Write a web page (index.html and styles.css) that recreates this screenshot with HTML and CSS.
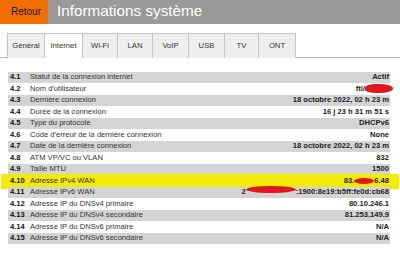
FILE: index.html
```html
<!DOCTYPE html>
<html lang="fr">
<head>
<meta charset="utf-8">
<title>Informations système</title>
<link rel="stylesheet" href="styles.css">
</head>
<body>
<header class="header">
  <div class="back">Retour</div>
  <h1 class="title">Informations système</h1>
</header>
<nav class="tabs">
  <div class="tab">Général</div>
  <div class="tab active">Internet</div>
  <div class="tab">Wi-Fi</div>
  <div class="tab">LAN</div>
  <div class="tab">VoIP</div>
  <div class="tab">USB</div>
  <div class="tab">TV</div>
  <div class="tab">ONT</div>
</nav>
<div class="table">
  <div class="row"><span class="num">4.1</span><span class="label">Statut de la connexion internet</span><span class="val">Actif</span></div>
  <div class="row"><span class="num">4.2</span><span class="label">Nom d'utilisateur</span><span class="val">fti/<span class="blob blob-user"></span></span></div>
  <div class="row"><span class="num">4.3</span><span class="label">Dernière connexion</span><span class="val">18 octobre 2022, 02 h 23 m</span></div>
  <div class="row"><span class="num">4.4</span><span class="label">Durée de la connexion</span><span class="val">16 j 23 h 31 m 51 s</span></div>
  <div class="row"><span class="num">4.5</span><span class="label">Type du protocole</span><span class="val">DHCPv6</span></div>
  <div class="row"><span class="num">4.6</span><span class="label">Code d'erreur de la dernière connexion</span><span class="val">None</span></div>
  <div class="row"><span class="num">4.7</span><span class="label">Date de la dernière connexion</span><span class="val">18 octobre 2022, 02 h 23 m</span></div>
  <div class="row"><span class="num">4.8</span><span class="label">ATM VP/VC ou VLAN</span><span class="val">832</span></div>
  <div class="row"><span class="num">4.9</span><span class="label">Taille MTU</span><span class="val">1500</span></div>
  <div class="row highlight"><span class="num">4.10</span><span class="label">Adresse IPv4 WAN</span><span class="val">83.<span class="blob blob-v4"></span>6.48</span></div>
  <div class="row"><span class="num">4.11</span><span class="label">Adresse IPv6 WAN</span><span class="val">2<span class="blob blob-v6"></span>:1900:8e19:b5ff:fe0d:cb68</span></div>
  <div class="row"><span class="num">4.12</span><span class="label">Adresse IP du DNSv4 primaire</span><span class="val">80.10.246.1</span></div>
  <div class="row"><span class="num">4.13</span><span class="label">Adresse IP du DNSv4 secondaire</span><span class="val">81.253.149.9</span></div>
  <div class="row"><span class="num">4.14</span><span class="label">Adresse IP du DNSv6 primaire</span><span class="val">N/A</span></div>
  <div class="row"><span class="num">4.15</span><span class="label">Adresse IP du DNSv6 secondaire</span><span class="val">N/A</span></div>
</div>
</body>
</html>
```

FILE: styles.css
```css
html, body {
  margin: 0;
  padding: 0;
  background: #ffffff;
}

body {
  font-family: "Liberation Sans", Arial, sans-serif;
  color: #222222;
  width: 400px;
  overflow: hidden;
}

.header {
  display: flex;
  height: 24px;
}

.back {
  width: 48px;
  box-sizing: border-box;
  padding-left: 11px;
  background: #f16e00;
  color: #111111;
  font-size: 10px;
  line-height: 24px;
}

.title {
  flex: 1;
  margin: 0;
  padding-left: 9px;
  background: #999999;
  color: #ffffff;
  font-weight: normal;
  font-size: 15.3px;
  line-height: 22px;
  height: 24px;
}

.tabs {
  display: grid;
  grid-template-columns: 38px 38px 35px 35px 36px 36px 34px 37px 1fr;
  margin-top: 9px;
  padding-left: 7px;
  height: 24px;
  border-bottom: 1px solid #b8b8b8;
}

.tab {
  box-sizing: border-box;
  height: 25px;
  border: 1px solid #c4c4c4;
  border-bottom: none;
  border-left: none;
  background: #efefef;
  color: #333333;
  font-size: 7.7px;
  line-height: 24px;
  text-align: center;
}

.tab:first-child {
  border-left: 1px solid #c4c4c4;
}

.tab.active {
  background: #ffffff;
}

.table {
  margin: 14px 10px 0 8px;
  display: flex;
  flex-direction: column;
  gap: 1px;
}

.row {
  position: relative;
  display: flex;
  height: 10.53px;
  line-height: 10.5px;
  font-size: 7.6px;
  padding: 0 1px 0 2px;
}

.row:nth-child(odd) {
  background: #d4d4d4;
}

.num {
  width: 20px;
  font-weight: bold;
  color: #111111;
}

.label {
  flex: 1;
  color: #333333;
}

.val {
  font-weight: bold;
  color: #222222;
  white-space: nowrap;
}

.highlight::before {
  content: "";
  position: absolute;
  left: -7px;
  right: -9px;
  top: -2px;
  bottom: -3px;
  background: #f3ea0a;
  z-index: -1;
}

.highlight {
  z-index: 0;
}

.blob {
  display: inline-block;
  background: #e3161c;
  border-radius: 50%;
  vertical-align: middle;
}

.blob-user {
  width: 28px;
  height: 9px;
  margin-right: -4px;
  border-radius: 40% 50% 50% 40%;
}

.blob-v4 {
  width: 20px;
  height: 6px;
}

.blob-v6 {
  width: 50px;
  height: 7px;
  position: relative;
  top: -3px;
}
```
